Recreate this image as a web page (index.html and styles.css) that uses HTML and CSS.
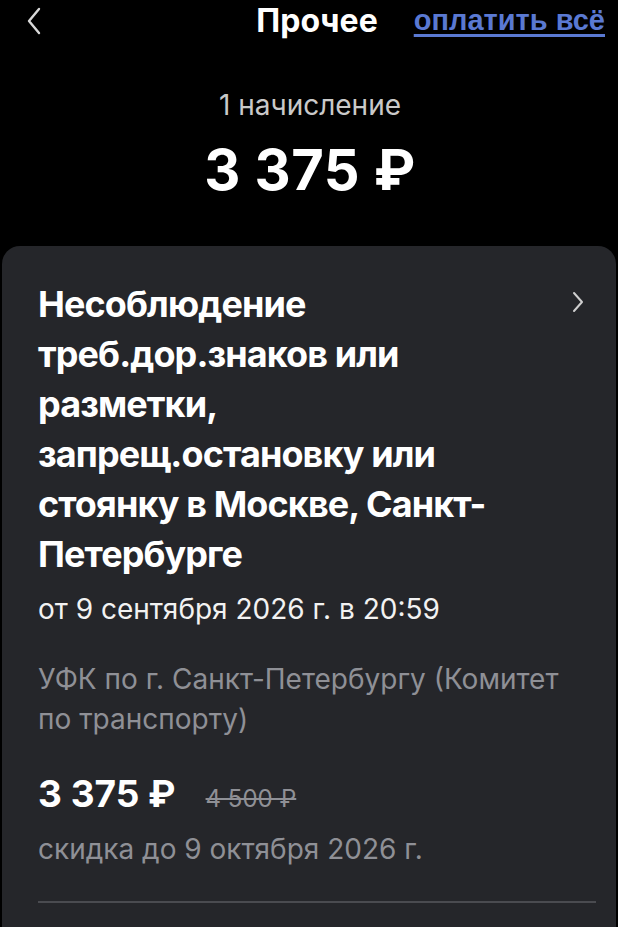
FILE: index.html
```html
<!DOCTYPE html>
<html lang="ru">
<head>
<meta charset="utf-8">
<link rel="stylesheet" href="styles.css">
</head>
<body>
<div class="screen">
  <header class="topbar">
    <div class="back">
      <svg width="14" height="28" viewBox="0 0 14 28"><path d="M12 2 L2 14 L12 26" fill="none" stroke="#d8d8d8" stroke-width="2.4" stroke-linecap="round" stroke-linejoin="round"/></svg>
    </div>
    <div class="title">Прочее</div>
    <a class="payall">оплатить всё</a>
  </header>
  <section class="summary">
    <div class="count">1 начисление</div>
    <div class="total">3 375 ₽</div>
  </section>
  <section class="card">
    <div class="card-head">
      <h2 class="fine-title">Несоблюдение треб.дор.знаков или разметки, запрещ.остановку или стоянку в Москве, Санкт-Петербурге</h2>
      <svg class="chev" width="12" height="22" viewBox="0 0 12 22"><path d="M2 2 L10 11 L2 20" fill="none" stroke="#cfcfcf" stroke-width="2" stroke-linecap="round" stroke-linejoin="round"/></svg>
    </div>
    <div class="date">от 9 сентября 2026 г. в 20:59</div>
    <div class="payee">УФК по г. Санкт-Петербургу (Комитет по транспорту)</div>
    <div class="price-row">
      <span class="price">3 375 ₽</span>
      <span class="old">4 500 ₽</span>
    </div>
    <div class="discount">скидка до 9 октября 2026 г.</div>
    <div class="divider"></div>
  </section>
</div>
</body>
</html>
```
FILE: styles.css
```css
html, body {
  margin: 0;
  padding: 0;
  background: #000;
}
body {
  font-family: Inter, Roboto, "Noto Sans", sans-serif;
  color: #fff;
  width: 618px;
  height: 927px;
  overflow: hidden;
}
.screen {
  display: flex;
  flex-direction: column;
  height: 927px;
}
.topbar {
  display: grid;
  grid-template-columns: 1fr auto 1fr;
  align-items: center;
  height: 40px;
  padding: 0 13px 0 27px;
}
.back {
  display: flex;
  align-items: center;
  padding-top: 2px;
}
.title {
  font-size: 32px;
  font-weight: 700;
  padding-left: 2px;
}
.payall {
  justify-self: end;
  font-family: "Liberation Sans", Arial, sans-serif;
  font-weight: 700;
  font-size: 29px;
  color: #5a79d2;
  text-decoration: underline;
  text-decoration-thickness: 3px;
  text-underline-offset: 4px;
}
.summary {
  display: flex;
  flex-direction: column;
  align-items: center;
  padding-top: 48px;
  padding-bottom: 44px;
}
.count {
  font-size: 28px;
  color: #c9c9c9;
  line-height: 34px;
  padding-left: 2px;
}
.total {
  font-size: 56px;
  font-weight: 700;
  letter-spacing: 0.5px;
  line-height: 64px;
  margin-top: 16px;
  padding-left: 2px;
}
.card {
  flex: 1;
  margin: 0 2px;
  background: #25262a;
  border-radius: 18px 18px 0 0;
  padding: 33px 32px 0 36px;
}
.card-head {
  display: flex;
  justify-content: space-between;
  align-items: flex-start;
}
.fine-title {
  margin: 0;
  font-size: 36px;
  font-weight: 700;
  line-height: 50px;
  letter-spacing: -0.9px;
  max-width: 450px;
}
.chev {
  margin-top: 12px;
}
.date {
  margin-top: 10px;
  font-size: 28px;
  line-height: 40px;
  color: #f2f2f2;
}
.payee {
  margin-top: 30px;
  font-size: 28px;
  line-height: 40px;
  color: #8f9096;
}
.price-row {
  margin-top: 32px;
  display: flex;
  align-items: baseline;
  gap: 30px;
}
.price {
  font-size: 37px;
  font-weight: 700;
  line-height: 46px;
}
.old {
  font-size: 24px;
  color: #8f9096;
  text-decoration: line-through;
}
.discount {
  margin-top: 12px;
  font-size: 28px;
  line-height: 40px;
  color: #8f9096;
}
.divider {
  margin-top: 32px;
  height: 2px;
  background: #4a4b50;
  width: 558px;
}
```
